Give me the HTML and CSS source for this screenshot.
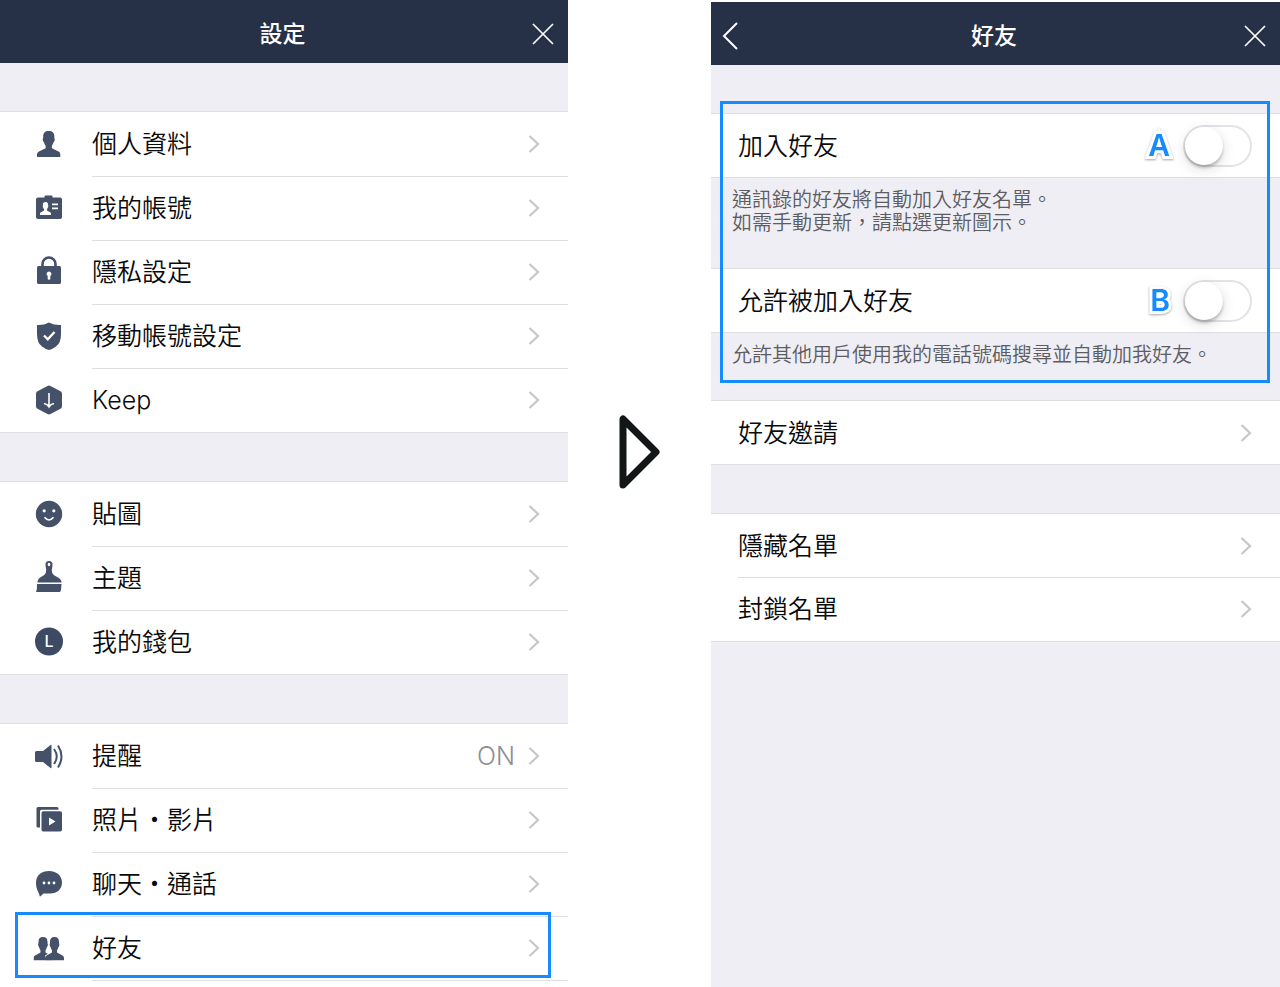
FILE: index.html
```html
<!DOCTYPE html>
<html lang="zh-Hant">
<head>
<meta charset="utf-8">
<meta name="viewport" content="width=device-width, initial-scale=1">
<title>設定 - 好友</title>
<link rel="stylesheet" href="styles.css">
</head>
<body>
<svg class="defs" aria-hidden="true">
  <symbol id="chevron" viewBox="0 0 12 20"><path d="M1.500 2 10 10l-8.500 8" fill="none" stroke="currentColor" stroke-width="2.300"/></symbol>
  <symbol id="close" viewBox="0 0 22 22"><path d="M1 1l20 20M21 1 1 21" fill="none" stroke="currentColor" stroke-width="1.700"/></symbol>
  <symbol id="person" viewBox="0 0 24 26" preserveAspectRatio="none"><path d="M12 0c4 0 5.700 2 5.700 5.500V7q.8.700.3 2.300-.3 1.400-1.100 2-.6 2.400-1.700 3.400v2.500L22 20.500q2 1 2 2.800V26H0v-2.700q0-1.800 2-2.800l6.800-3.300v-2.500q-1.100-1-1.700-3.400-.8-.6-1.100-2Q5.500 7.700 6.300 7V5.500C6.300 2 8 0 12 0z"/></symbol>
</svg>
<main class="page">
  <section class="panel" aria-labelledby="settings-title">
    <header class="bar">
      <h1 class="title" id="settings-title">設定</h1>
      <button class="bar-button close" type="button" aria-label="關閉"><svg class="close-icon"><use href="#close"/></svg></button>
    </header>
    <nav class="list">
      <div class="group">
        <a class="row" href="#profile">
          <svg class="icon" viewBox="0 0 30 30"><use href="#person" x="3" y="2" width="23.500" height="26"/></svg>
          <span class="label">個人資料</span><svg class="chevron"><use href="#chevron"/></svg>
        </a>
        <a class="row" href="#account">
          <svg class="icon" viewBox="0 0 30 30"><path d="M4 4.500h6.500v-1q0-1 1-1h6q1 0 1 1v1H26q2 0 2 2V24q0 2-2 2H4q-2 0-2-2V6.500q0-2 2-2z"/><use href="#person" class="cutout" x="6" y="9" width="11" height="13"/><path class="cutout" d="M18 10.500h6v1.700h-6zM18 14.500h6v1.700h-6z"/></svg>
          <span class="label">我的帳號</span><svg class="chevron"><use href="#chevron"/></svg>
        </a>
        <a class="row" href="#privacy">
          <svg class="icon" viewBox="0 0 30 30"><path class="line" stroke-width="2.600" d="M8.500 11V7a6.500 6.500 0 0 1 13 0V11"/><rect x="3" y="9" width="24" height="18" rx="1.500"/><path class="cutout" d="M15 14.500a2.500 2.500 0 0 1 1.300 4.600V22q0 .8-1.300.8T13.700 22v-2.900A2.500 2.500 0 0 1 15 14.500z"/></svg>
          <span class="label">隱私設定</span><svg class="chevron"><use href="#chevron"/></svg>
        </a>
        <a class="row" href="#transfer">
          <svg class="icon" viewBox="0 0 30 30"><path d="M15 1.500q5 2.800 12 2.500v9q0 9-5 12.500-4 3-7 3.500-3-.5-7-3.500-5-3.500-5-12.500V4q7 .3 12-2.500z"/><path d="m10 14.500 3.800 3.800L20.500 11" fill="none" stroke="#fff" stroke-width="2.300"/></svg>
          <span class="label">移動帳號設定</span><svg class="chevron"><use href="#chevron"/></svg>
        </a>
        <a class="row" href="#keep">
          <svg class="icon" viewBox="0 0 30 30"><path d="M13.500 1q1.500-.8 3 0l10 5.200Q28 7 28 8.800v12.400q0 1.800-1.500 2.600l-10 5.200q-1.500.8-3 0l-10-5.200Q2 23 2 21.200V8.800Q2 7 3.500 6.200z"/><path d="M15 8v13.500M10 18.500q3.500.5 5 3.300 1.500-2.800 5-3.300" fill="none" stroke="#fff" stroke-width="1.600"/></svg>
          <span class="label">Keep</span><svg class="chevron"><use href="#chevron"/></svg>
        </a>
      </div>
      <div class="group">
        <a class="row" href="#stickers">
          <svg class="icon" viewBox="0 0 30 30"><circle cx="15" cy="15" r="13.200"/><circle class="cutout" cx="10.200" cy="11.800" r="1.600"/><circle class="cutout" cx="19.800" cy="11.800" r="1.600"/><path d="M10.500 18.200q4.500 5.500 9 0" fill="none" stroke="#fff" stroke-width="1.600"/></svg>
          <span class="label">貼圖</span><svg class="chevron"><use href="#chevron"/></svg>
        </a>
        <a class="row" href="#themes">
          <svg class="icon" viewBox="0 0 30 30"><path d="M15-2q4 0 3.500 4.500-1.200 5-.3 7.500.8 2 4.800 4 4.500 2 4.500 5.500h-24Q3.500 16 7 14q4-2 4.800-4 .9-2.500-.3-7.500Q11-2 15-2zM3 21h24.500l-.5 6q-.2 2-1.500 2H2q1.300-3 1-8z"/><ellipse class="cutout" cx="15" cy="1.500" rx="1.300" ry="1.700"/></svg>
          <span class="label">主題</span><svg class="chevron"><use href="#chevron"/></svg>
        </a>
        <a class="row" href="#wallet">
          <svg class="icon" viewBox="0 0 30 30"><circle class="coin" cx="15" cy="14.500" r="14"/><text class="coin-letter" x="15" y="20" text-anchor="middle">L</text></svg>
          <span class="label">我的錢包</span><svg class="chevron"><use href="#chevron"/></svg>
        </a>
      </div>
      <div class="group open-ended">
        <a class="row" href="#notifications">
          <svg class="icon" viewBox="0 0 30 30"><path d="M2.500 10H9l7.500-6q1-.7 1 .5v22q0 1.200-1 .5L9 21H2.500Q1 21 1 19.500v-8Q1 10 2.500 10z"/><path class="line" stroke-width="2" d="M20 8q5.500 7.500 0 15M24 4.500q7 11 0 22"/></svg>
          <span class="label">提醒</span><span class="value">ON</span><svg class="chevron"><use href="#chevron"/></svg>
        </a>
        <a class="row" href="#media">
          <svg class="icon" viewBox="0 0 30 30"><path d="M4 2h19q1.500 0 1.500 1.500V4.800H7.500Q6 4.800 6 6.300V22.500H4q-1.500 0-1.500-1.500V3.500Q2.500 2 4 2z"/><rect x="7.500" y="6.300" width="20.500" height="20.200" rx="1.800"/><path class="cutout" d="m15 12.500 6.500 4-6.500 4z"/></svg>
          <span class="label">照片・影片</span><svg class="chevron"><use href="#chevron"/></svg>
        </a>
        <a class="row" href="#chats">
          <svg class="icon" viewBox="0 0 30 30"><path d="M15 2c8 0 13 5 13 11.500S23.500 24.500 16 24.500h-6.500L6.500 27.300q-.8.400-1-.8C5 23 2 20.500 2 14 2 6 7.500 2 15 2z"/><g class="cutout"><circle cx="10" cy="14" r="1.400"/><circle cx="15" cy="14" r="1.400"/><circle cx="20" cy="14" r="1.400"/></g></svg>
          <span class="label">聊天・通話</span><svg class="chevron"><use href="#chevron"/></svg>
        </a>
        <a class="row marked" href="#friends">
          <svg class="icon" viewBox="0 0 30 30"><use href="#person" x="-0.500" y="4" width="19" height="23.500"/><use href="#person" class="halo" x="11" y="4" width="19" height="23.500"/></svg>
          <span class="label">好友</span><svg class="chevron"><use href="#chevron"/></svg>
        </a>
      </div>
    </nav>
  </section>

  <div class="step" aria-hidden="true">
    <svg class="step-arrow" viewBox="0 0 42 75"><path d="M4 4v66L37 37z" fill="none" stroke="#131616" stroke-width="7" stroke-linejoin="round"/></svg>
  </div>

  <section class="panel detail" id="friends" aria-labelledby="friends-title">
    <header class="bar">
      <button class="bar-button back" type="button" aria-label="返回"><svg class="back-icon" viewBox="0 0 16 28"><path d="M15 1 2 14l13 13" fill="none" stroke="currentColor" stroke-width="2"/></svg></button>
      <h2 class="title" id="friends-title">好友</h2>
      <button class="bar-button close" type="button" aria-label="關閉"><svg class="close-icon"><use href="#close"/></svg></button>
    </header>
    <div class="list">
      <div class="marked-area">
        <div class="group">
          <div class="row">
            <label class="label" for="auto-add">加入好友</label>
            <span class="tag">A</span>
            <input class="switch" type="checkbox" role="switch" id="auto-add">
          </div>
        </div>
        <p class="note tall">通訊錄的好友將自動加入好友名單。<br>如需手動更新，請點選更新圖示。</p>
        <div class="group">
          <div class="row">
            <label class="label" for="allow-add">允許被加入好友</label>
            <span class="tag">B</span>
            <input class="switch" type="checkbox" role="switch" id="allow-add">
          </div>
        </div>
        <p class="note">允許其他用戶使用我的電話號碼搜尋並自動加我好友。</p>
      </div>
      <div class="group">
        <a class="row" href="#invite"><span class="label">好友邀請</span><svg class="chevron"><use href="#chevron"/></svg></a>
      </div>
      <div class="group">
        <a class="row" href="#hidden"><span class="label">隱藏名單</span><svg class="chevron"><use href="#chevron"/></svg></a>
        <a class="row" href="#blocked"><span class="label">封鎖名單</span><svg class="chevron"><use href="#chevron"/></svg></a>
      </div>
    </div>
  </section>
</main>
</body>
</html>
```
FILE: styles.css
```css
:root {
  --navy: #263047;
  --icon: #455069;
  --surface: #efeef4;
  --line: #dfdfe3;
  --blue: #168bfe;
  --row: 64px;
  --inset: 92px;
}

* {
  box-sizing: border-box;
}

body {
  margin: 0;
  background: #fff;
  color: #0a0a0a;
  font-family: Inter, "Noto Sans CJK TC", sans-serif;
  font-size: 25px;
  font-weight: 350;
}

.defs {
  display: none;
}

.page {
  display: grid;
  grid-template-columns: 568fr 143fr 569fr;
  min-height: 100vh;
}

.bar {
  display: grid;
  grid-template-columns: 1fr auto 1fr;
  align-items: center;
  height: 63px;
  padding: 4px 14px 0 11px;
  background: var(--navy);
  color: #fff;
}

.title {
  grid-column: 2;
  margin: 0;
  font-size: 23px;
  font-weight: 500;
  line-height: 32px;
}

.bar-button {
  display: flex;
  padding: 0;
  border: 0;
  background: none;
  color: #fff;
  cursor: pointer;
}

.close {
  grid-column: 3;
  justify-self: end;
}

.back {
  justify-self: start;
}

.close-icon {
  width: 22px;
  height: 22px;
}

.back-icon {
  width: 16px;
  height: 28px;
}

.list {
  display: flex;
  flex-direction: column;
  gap: 48px;
  padding-top: 48px;
  background: var(--surface);
}

.group {
  border: solid var(--line);
  border-width: 1px 0;
  background: #fff;
}

.row {
  position: relative;
  display: flex;
  align-items: center;
  height: var(--row);
  padding: 0 28px 0 34px;
  color: inherit;
  text-decoration: none;
}

.row + .row,
.open-ended::after {
  background: linear-gradient(var(--line), var(--line)) var(--inset) 0 / 100% 1px no-repeat;
}

.open-ended {
  border-bottom: 0;
}

.open-ended::after {
  content: "";
  display: block;
  height: 1px;
}

.icon {
  width: 30px;
  height: 30px;
  margin-right: 28px;
  overflow: visible;
  fill: var(--icon);
}

.line {
  fill: none;
  stroke: var(--icon);
}

.cutout {
  fill: #fff;
}

.halo {
  stroke: #fff;
  stroke-width: 2px;
  paint-order: stroke;
}

.coin {
  fill: #3c4a64;
}

.coin-letter {
  fill: #fff;
  font-size: 16px;
  font-weight: 500;
}

.label {
  flex: 1;
  line-height: 36px;
}

.value {
  margin-right: 13px;
  color: #8e8e93;
}

.chevron {
  width: 12px;
  height: 20px;
  color: #c7c7cc;
}

.marked::after,
.marked-area::after {
  content: "";
  position: absolute;
  border: 3px solid var(--blue);
  pointer-events: none;
}

.marked::after {
  inset: -4px 17px 2px 15px;
}

.step {
  display: flex;
  justify-content: center;
  align-items: flex-start;
  padding-top: 415px;
}

.step-arrow {
  width: 42px;
  height: 75px;
}

.detail {
  --row: 63px;
  --inset: 27px;
  margin-top: 2px;
  background: var(--surface);
}

.detail .row {
  padding-left: 27px;
}

.detail .row + .row {
  height: 64px;
}

.marked-area {
  position: relative;
  margin-bottom: -48px;
}

.marked-area::after {
  inset: -12px 10px 17px 9px;
}

.note {
  min-height: 67px;
  margin: 0;
  padding: 11px 21px;
  color: #5c5c61;
  font-size: 20px;
  line-height: 23px;
}

.note.tall {
  min-height: 90px;
}

.tag {
  margin-right: 13px;
  padding-bottom: 2px;
  color: var(--blue);
  font-size: 30px;
  font-weight: 600;
  line-height: 36px;
  -webkit-text-stroke: 6px #fff;
  paint-order: stroke fill;
  filter: drop-shadow(0 1px 1px rgba(0, 0, 0, 0.35));
}

.switch {
  appearance: none;
  flex: none;
  width: 69px;
  height: 42px;
  margin: 0;
  border: 2px solid #e3e3e5;
  border-radius: 21px;
  background: #fff;
  cursor: pointer;
}

.switch::before {
  content: "";
  display: block;
  width: 38px;
  height: 38px;
  border-radius: 50%;
  background: #fff;
  box-shadow: 0 3px 3px rgba(0, 0, 0, 0.2), 0 4px 14px rgba(0, 0, 0, 0.14);
}

.switch:checked {
  background: #4cd964;
}

.switch:checked::before {
  margin-left: 27px;
}
```
